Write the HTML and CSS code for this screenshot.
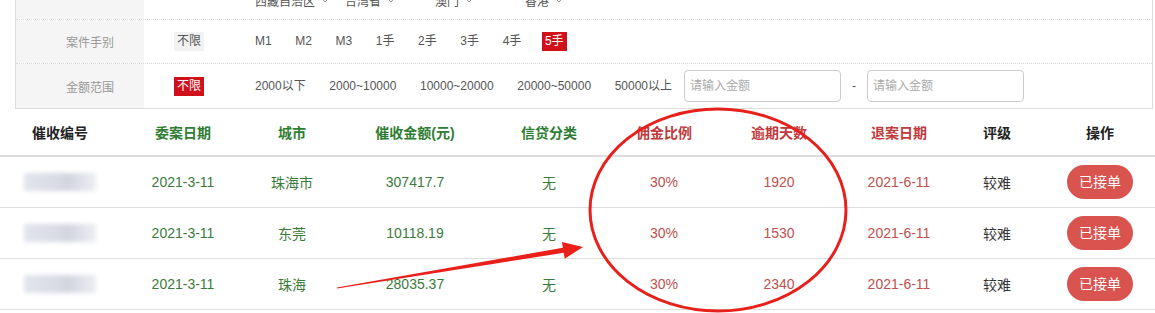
FILE: index.html
```html
<!DOCTYPE html>
<html lang="zh-CN">
<head>
<meta charset="utf-8">
<title>案件列表</title>
<link rel="stylesheet" href="styles.css">
</head>
<body>
<div class="page">
  <div class="filter">
    <div class="frow first">
      <div class="flabel"></div>
      <div class="fall"></div>
      <div class="fopts">
        <span class="region">西藏自治区<svg class="chev" viewBox="0 0 8 5"><polyline points="0.5,0.5 4,4 7.5,0.5"/></svg></span>
        <span class="region">台湾省<svg class="chev" viewBox="0 0 8 5"><polyline points="0.5,0.5 4,4 7.5,0.5"/></svg></span>
        <span class="region">澳门<svg class="chev" viewBox="0 0 8 5"><polyline points="0.5,0.5 4,4 7.5,0.5"/></svg></span>
        <span class="region">香港<svg class="chev" viewBox="0 0 8 5"><polyline points="0.5,0.5 4,4 7.5,0.5"/></svg></span>
      </div>
    </div>
    <div class="frow">
      <div class="flabel">案件手别</div>
      <div class="fall"><span class="tag tag-gray">不限</span></div>
      <div class="fopts">
        <span class="opt">M1</span>
        <span class="opt">M2</span>
        <span class="opt">M3</span>
        <span class="opt">1手</span>
        <span class="opt">2手</span>
        <span class="opt">3手</span>
        <span class="opt">4手</span>
        <span class="opt tag-red">5手</span>
      </div>
    </div>
    <div class="frow last">
      <div class="flabel">金额范围</div>
      <div class="fall"><span class="tag tag-red">不限</span></div>
      <div class="fopts">
        <span class="opt">2000以下</span>
        <span class="opt">2000~10000</span>
        <span class="opt">10000~20000</span>
        <span class="opt">20000~50000</span>
        <span class="opt">50000以上</span>
        <input class="amount" type="text" placeholder="请输入金额">
        <span class="dash">-</span>
        <input class="amount" type="text" placeholder="请输入金额">
      </div>
    </div>
  </div>

  <table class="grid">
    <colgroup>
      <col style="width:120px">
      <col style="width:126px">
      <col style="width:92px">
      <col style="width:154px">
      <col style="width:114px">
      <col style="width:116px">
      <col style="width:114px">
      <col style="width:126px">
      <col style="width:70px">
      <col style="width:136px">
    </colgroup>
    <thead>
      <tr>
        <th class="c-dark">催收编号</th>
        <th class="c-green">委案日期</th>
        <th class="c-green">城市</th>
        <th class="c-green">催收金额(元)</th>
        <th class="c-green">信贷分类</th>
        <th class="c-red">佣金比例</th>
        <th class="c-red">逾期天数</th>
        <th class="c-red">退案日期</th>
        <th class="c-dark">评级</th>
        <th class="c-dark">操作</th>
      </tr>
    </thead>
    <tbody>
      <tr>
        <td><span class="blurid"></span></td>
        <td class="d-green">2021-3-11</td>
        <td class="d-green">珠海市</td>
        <td class="d-green">307417.7</td>
        <td class="d-green">无</td>
        <td class="d-red">30%</td>
        <td class="d-red">1920</td>
        <td class="d-red">2021-6-11</td>
        <td class="d-dark">较难</td>
        <td><span class="btn">已接单</span></td>
      </tr>
      <tr>
        <td><span class="blurid"></span></td>
        <td class="d-green">2021-3-11</td>
        <td class="d-green">东莞</td>
        <td class="d-green">10118.19</td>
        <td class="d-green">无</td>
        <td class="d-red">30%</td>
        <td class="d-red">1530</td>
        <td class="d-red">2021-6-11</td>
        <td class="d-dark">较难</td>
        <td><span class="btn">已接单</span></td>
      </tr>
      <tr>
        <td><span class="blurid"></span></td>
        <td class="d-green">2021-3-11</td>
        <td class="d-green">珠海</td>
        <td class="d-green">28035.37</td>
        <td class="d-green">无</td>
        <td class="d-red">30%</td>
        <td class="d-red">2340</td>
        <td class="d-red">2021-6-11</td>
        <td class="d-dark">较难</td>
        <td><span class="btn">已接单</span></td>
      </tr>
    </tbody>
  </table>

  <svg class="annot" viewBox="0 0 1155 313" width="1155" height="313">
    <ellipse cx="718" cy="210" rx="128" ry="101" fill="none" stroke="#e8201c" stroke-width="3"/>
    <polygon fill="#ea1f1a" points="336.9,287.4 562.9,247.8 561.9,241.9 583,247 564.7,258.7 563.7,252.8 337.1,288.6"/>
  </svg>
</div>
</body>
</html>
```

FILE: styles.css
```css
* { box-sizing: border-box; }

html, body {
  margin: 0;
  padding: 0;
  background: #fff;
}

body {
  font-family: "Liberation Sans", "Noto Sans CJK SC", sans-serif;
  color: #333;
}

.page {
  position: relative;
  width: 1155px;
  height: 313px;
  overflow: hidden;
}

/* ---------- filter panel ---------- */
.filter {
  margin-top: -24px;
  margin-left: 15px;
  width: 1138px;
  border: 1px solid #ddd;
  border-top: none;
  font-size: 12px;
}

.frow {
  display: flex;
  align-items: stretch;
  height: 44px;
  border-bottom: 1px dotted #ddd;
}

.frow.first .fopts {
  padding-top: 5px;
}

.frow.last {
  border-bottom: none;
}

.flabel {
  width: 128px;
  flex: none;
  background: #f5f5f5;
  color: #999;
  text-align: right;
  padding-right: 30px;
  display: flex;
  align-items: center;
  justify-content: flex-end;
}

.fall {
  width: 108px;
  flex: none;
  padding-left: 30px;
  display: flex;
  align-items: center;
}

.fopts {
  display: flex;
  align-items: center;
  color: #555;
}

.tag,
.opt {
  display: inline-block;
  line-height: 19px;
  padding: 0 3px;
  white-space: nowrap;
}

.opt + .opt {
  margin-left: 17.6px;
}

.tag-gray {
  background: #f2f2f2;
  color: #555;
}

.tag-red {
  background: #d0111b;
  color: #fff;
}

.region {
  display: inline-flex;
  align-items: center;
  width: 90px;
  padding-left: 3px;
  white-space: nowrap;
}

.chev {
  width: 8px;
  height: 5px;
  margin-left: 6px;
  fill: none;
  stroke: #999;
  stroke-width: 1;
}

.amount {
  margin-left: 9px;
  width: 157px;
  height: 32px;
  border: 1px solid #ccc;
  border-radius: 4px;
  padding: 0 5px;
  font-family: "Liberation Sans", "Noto Sans CJK SC", sans-serif;
  font-size: 12px;
  color: #555;
  background: #fff;
}

.amount::placeholder {
  color: #aaa;
}

.dash {
  width: 26px;
  text-align: center;
  color: #555;
}

.dash + .amount {
  margin-left: 0;
}

/* ---------- table ---------- */
.grid {
  width: 1168px;
  border-collapse: collapse;
  table-layout: fixed;
  font-size: 14px;
}

.grid th {
  height: 47px;
  font-weight: bold;
  text-align: center;
  vertical-align: middle;
  border-bottom: 2px solid #ddd;
  padding: 0;
}

.grid td {
  height: 51px;
  text-align: center;
  vertical-align: middle;
  border-bottom: 1px solid #ddd;
  padding: 0;
}

.c-dark { color: #222; }
.c-green { color: #2e7d32; }
.c-red { color: #c0393b; }

.d-green { color: #3c7a3c; }
.d-red { color: #c0504d; }
.d-dark { color: #333; }

.blurid {
  display: inline-block;
  width: 72px;
  height: 18px;
  vertical-align: middle;
  background: linear-gradient(90deg, #e3e5ed 0%, #d9dbe5 45%, #d2d5df 60%, #eceef3 100%);
  filter: blur(2px);
}

.btn {
  display: inline-block;
  height: 34px;
  line-height: 34px;
  padding: 0 12px;
  border-radius: 17px;
  background: #d9534f;
  color: #fff;
  font-size: 14px;
}

/* ---------- annotation overlay ---------- */
.annot {
  position: absolute;
  left: 0;
  top: 0;
  pointer-events: none;
}
```
